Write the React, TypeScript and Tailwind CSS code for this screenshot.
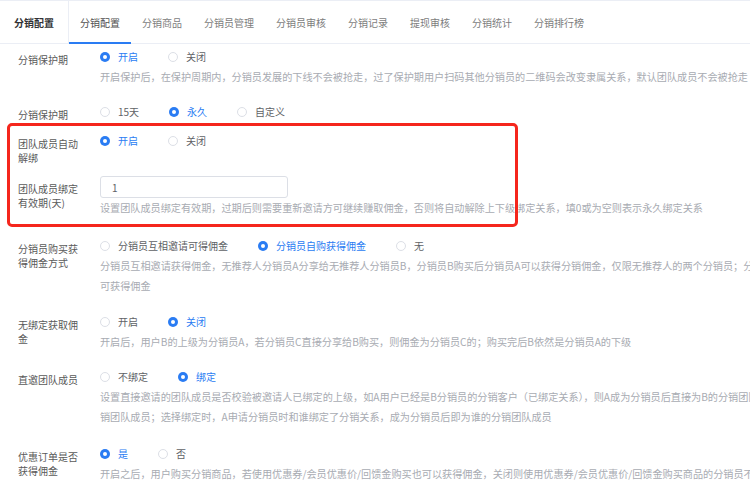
import { ReactNode } from 'react';

const tabs = ['分销配置', '分销商品', '分销员管理', '分销员审核', '分销记录', '提现审核', '分销统计', '分销排行榜'];

type Opt = { text: string; checked?: boolean };

function Radios({ options }: { options: Opt[] }) {
  return (
    <div className="flex h-5 items-center text-[10px]">
      {options.map((o) => (
        <div key={o.text} className="mr-[30px] flex items-center">
          {o.checked ? (
            <span className="flex h-[10px] w-[10px] items-center justify-center rounded-full bg-[#2a7cf3]">
              <span className="h-[4px] w-[4px] rounded-full bg-white" />
            </span>
          ) : (
            <span className="h-[10px] w-[10px] rounded-full border border-[#dcdfe6] bg-white" />
          )}
          <span className={`ml-[8px] leading-5 ${o.checked ? 'text-[#2a7cf3]' : 'text-[#606266]'}`}>{o.text}</span>
        </div>
      ))}
    </div>
  );
}

function Help({ lines }: { lines: string[] }) {
  return (
    <div className="text-[10.15px] leading-5 text-[#a8abb2]">
      {lines.map((l) => (
        <div key={l} className="whitespace-nowrap">
          {l}
        </div>
      ))}
    </div>
  );
}

function Row({ label, children, className = '' }: { label: string; children: ReactNode; className?: string }) {
  return (
    <div className={`flex ${className}`}>
      <div className="w-[100px] shrink-0 px-[18px] pt-[6px] text-[10px] leading-[14px] text-[#5a5a5a]">{label}</div>
      <div className="min-w-0 flex-1">{children}</div>
    </div>
  );
}

export default function App() {
  return (
    <div className="relative h-[490px] w-[750px] overflow-hidden bg-white font-['Noto_Sans_CJK_SC',sans-serif]">
      <header className="flex h-[44px] border-y border-[#ebeef5]">
        <div className="flex items-center border-r border-[#ebeef5] px-[14px] text-[10px] font-semibold text-[#303133]">
          分销配置
        </div>
        {tabs.map((t, i) => (
          <div
            key={t}
            className={`relative flex items-center px-[11px] text-[10px] ${i === 0 ? 'text-[#515151]' : 'text-[#7d7d7d]'}`}
          >
            {t}
            {i === 0 && <span className="absolute bottom-[-1px] left-0 right-0 h-[2px] bg-[#2a7cf3]" />}
          </div>
        ))}
      </header>

      <div className="pt-[3px]">
        <Row label="分销保护期" className="mb-[15px]">
          <Radios options={[{ text: '开启', checked: true }, { text: '关闭' }]} />
          <Help
            lines={[
              '开启保护后，在保护周期内，分销员发展的下线不会被抢走，过了保护期用户扫码其他分销员的二维码会改变隶属关系，默认团队成员不会被抢走',
            ]}
          />
        </Row>

        <Row label="分销保护期" className="mb-[9px]">
          <Radios options={[{ text: '15天' }, { text: '永久', checked: true }, { text: '自定义' }]} />
        </Row>

        <Row label="团队成员自动解绑" className="mb-[11px]">
          <Radios options={[{ text: '开启', checked: true }, { text: '关闭' }]} />
        </Row>

        <Row label="团队成员绑定有效期(天)" className="mb-[18px]">
          <input
            readOnly
            defaultValue="1"
            className="block h-[22px] w-[188px] rounded-[3px] border border-[#dcdfe6] px-[11px] text-[10px] text-[#606266] outline-none"
          />
          <Help
            lines={[
              '设置团队成员绑定有效期，过期后则需要重新邀请方可继续赚取佣金，否则将自动解除上下级绑定关系，填0或为空则表示永久绑定关系',
            ]}
          />
        </Row>

        <Row label="分销员购买获得佣金方式" className="mb-[16px]">
          <Radios options={[{ text: '分销员互相邀请可得佣金' }, { text: '分销员自购获得佣金', checked: true }, { text: '无' }]} />
          <Help
            lines={[
              '分销员互相邀请获得佣金，无推荐人分销员A分享给无推荐人分销员B，分销员B购买后分销员A可以获得分销佣金，仅限无推荐人的两个分销员；分销员自购',
              '可获得佣金',
            ]}
          />
        </Row>

        <Row label="无绑定获取佣金" className="mb-[15px]">
          <Radios options={[{ text: '开启' }, { text: '关闭', checked: true }]} />
          <Help lines={['开启后，用户B的上级为分销员A，若分销员C直接分享给B购买，则佣金为分销员C的；购买完后B依然是分销员A的下级']} />
        </Row>

        <Row label="直邀团队成员" className="mb-[17px]">
          <Radios options={[{ text: '不绑定' }, { text: '绑定', checked: true }]} />
          <Help
            lines={[
              '设置直接邀请的团队成员是否校验被邀请人已绑定的上级，如A用户已经是B分销员的分销客户（已绑定关系），则A成为分销员后直接为B的分销团队成员',
              '销团队成员；选择绑定时，A申请分销员时和谁绑定了分销关系，成为分销员后即为谁的分销团队成员',
            ]}
          />
        </Row>

        <Row label="优惠订单是否获得佣金">
          <Radios options={[{ text: '是', checked: true }, { text: '否' }]} />
          <Help
            lines={[
              '开启之后，用户购买分销商品，若使用优惠券/会员优惠价/回馈金购买也可以获得佣金，关闭则使用优惠券/会员优惠价/回馈金购买商品的分销员不可获得佣金',
            ]}
          />
        </Row>
      </div>

      {/* red annotation frame */}
      <div className="pointer-events-none absolute left-[7px] top-[123px] h-[104px] w-[511px] rounded-[5px] border-[3px] border-[#f5261d]" />
    </div>
  );
}
